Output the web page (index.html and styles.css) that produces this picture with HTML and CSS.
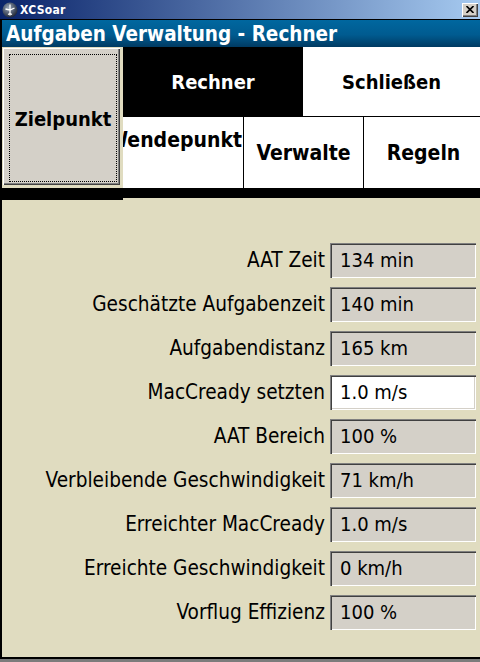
FILE: index.html
```html
<!DOCTYPE html>
<html>
<head>
<meta charset="utf-8">
<link rel="stylesheet" href="styles.css">
</head>
<body>
<div class="screen">
  <div class="titlebar">
    <svg class="appicon" width="16" height="16" viewBox="0 0 16 16">
      <defs>
        <radialGradient id="g" cx="0.4" cy="0.35" r="0.7">
          <stop offset="0" stop-color="#9aa6b8"/>
          <stop offset="0.6" stop-color="#4a5568"/>
          <stop offset="1" stop-color="#1c2230"/>
        </radialGradient>
      </defs>
      <circle cx="8" cy="8" r="7.5" fill="url(#g)"/>
      <path d="M8 2.5 V13.5 M3.5 7 L8 8 L12.5 6 M6 12.5 L8 11.5 L10 12.5" stroke="#fff" stroke-width="1.3" fill="none"/>
    </svg>
    <span class="apptitle">XCSoar</span>
    <div class="closebtn">
      <svg width="8" height="7" viewBox="0 0 8 7"><path d="M0.5 0 L7.5 7 M7.5 0 L0.5 7" stroke="#000" stroke-width="1.6"/></svg>
    </div>
  </div>
  <div class="frame">
    <div class="caption">Aufgaben Verwaltung - Rechner</div>
    <div class="top">
      <div class="leftcol">
        <div class="bigbtn"><div class="focus">Zielpunkt</div></div>
        <div class="strip strip-left"></div>
      </div>
      <div class="rightcol">
        <div class="row1">
          <div class="tab tab-active">Rechner</div>
          <div class="tab tab-white">Schließen</div>
        </div>
        <div class="row2">
          <div class="tab2 tab2-clip"><span>Wendepunkt</span></div>
          <div class="tab2 tab2-sep">Verwalte</div>
          <div class="tab2 tab2-sep">Regeln</div>
        </div>
        <div class="strip strip-right"></div>
      </div>
    </div>
    <div class="form">
      <div class="label">AAT Zeit</div><div class="value">134 min</div>
      <div class="label">Geschätzte Aufgabenzeit</div><div class="value">140 min</div>
      <div class="label">Aufgabendistanz</div><div class="value">165 km</div>
      <div class="label">MacCready setzten</div><div class="value value-edit">1.0 m/s</div>
      <div class="label">AAT Bereich</div><div class="value">100 %</div>
      <div class="label">Verbleibende Geschwindigkeit</div><div class="value">71 km/h</div>
      <div class="label">Erreichter MacCready</div><div class="value">1.0 m/s</div>
      <div class="label">Erreichte Geschwindigkeit</div><div class="value">0 km/h</div>
      <div class="label">Vorflug Effizienz</div><div class="value">100 %</div>
    </div>
  </div>
</div>
</body>
</html>
```

FILE: styles.css
```css
* { box-sizing: border-box; }
html, body { margin: 0; padding: 0; }
body {
  width: 480px;
  height: 662px;
  overflow: hidden;
  background: #7c7c7c;
  font-family: "DejaVu Sans Condensed", "DejaVu Sans", sans-serif;
}
.screen { width: 480px; height: 662px; display: flex; flex-direction: column; }

.titlebar {
  height: 19px;
  display: flex;
  align-items: center;
  background: linear-gradient(to right, #0a246a, #a6caf0);
  padding-left: 2px;
  position: relative;
}
.appicon { display: block; }
.apptitle {
  color: #fff;
  font-weight: bold;
  font-size: 12px;
  margin-left: 2px;
  letter-spacing: 0.3px;
}
.closebtn {
  position: absolute;
  left: 462px;
  top: 3px;
  width: 16px;
  height: 14px;
  background: #d4d0c8;
  box-shadow: inset 1px 1px #fff, inset -1px -1px #404040, inset -2px -2px #808080;
  display: flex;
  align-items: center;
  justify-content: center;
  padding-bottom: 1px;
}
.closebtn svg { display: block; }

.frame {
  height: 640px;
  border-top: 1px solid #000;
  border-left: 2px solid #000;
  border-bottom: 2px solid #000;
  background: #e0dcc0;
  display: flex;
  flex-direction: column;
}
.caption {
  height: 27px;
  background: linear-gradient(#00679f, #005b90 55%, #003a62);
  color: #fff;
  font-weight: bold;
  font-size: 20.5px;
  line-height: 27px;
  padding-left: 4px;
  padding-top: 1px;
  white-space: nowrap;
}

.top { display: flex; height: 153px; }
.leftcol {
  width: 121px;
  display: flex;
  flex-direction: column;
}
.bigbtn {
  margin: 1px 3px 3px 1px;
  height: 137px;
  background: #d4d0c8;
  box-shadow: inset 1px 1px #fff, inset -1px -1px #404040, inset -2px -2px #808080;
  padding: 6px 3px 3px 6px;
}
.focus {
  height: 100%;
  border: 1px dotted #000;
  display: flex;
  align-items: center;
  justify-content: center;
  font-weight: bold;
  font-size: 20px;
  color: #000;
  padding-top: 2px;
}
.strip { background: #000; }
.strip-left { height: 12px; }
.rightcol {
  flex: 1;
  display: flex;
  flex-direction: column;
  overflow: hidden;
}
.row1 { display: flex; height: 70px; }
.tab {
  display: flex;
  align-items: center;
  justify-content: center;
  font-weight: bold;
  font-size: 20px;
}
.tab-active { width: 180px; background: #000; color: #fff; }
.tab-white { flex: 1; background: #fff; color: #000; border-bottom: 1px solid #000; }
.row2 { display: flex; height: 71px; width: 360px; }
.tab2 {
  width: 120px;
  background: #fff;
  color: #000;
  font-weight: bold;
  font-size: 21px;
  display: flex;
  align-items: center;
  justify-content: center;
  overflow: hidden;
  white-space: nowrap;
}
.tab2-clip { justify-content: flex-end; align-items: flex-start; padding-top: 11px; padding-right: 1px; }
.tab2-sep { border-left: 1px solid #000; }
.strip-right { height: 10px; }

.form {
  flex: 1;
  display: grid;
  grid-template-columns: 1fr 146px;
  grid-auto-rows: 35px;
  row-gap: 9px;
  column-gap: 5px;
  padding: 43px 4px 0 0;
  align-content: start;
}
.label {
  text-align: right;
  font-size: 20.6px;
  color: #000;
  line-height: 35px;
  white-space: nowrap;
}
.value {
  background: #d4d0c8;
  box-shadow: inset 1px 1px #808080, inset 2px 2px #404040, inset -1px -1px #fff, inset -2px -2px #d4d0c8;
  font-size: 20px;
  line-height: 35px;
  padding-left: 10px;
  color: #000;
  white-space: nowrap;
}
.value-edit { background: #fff; }
```
